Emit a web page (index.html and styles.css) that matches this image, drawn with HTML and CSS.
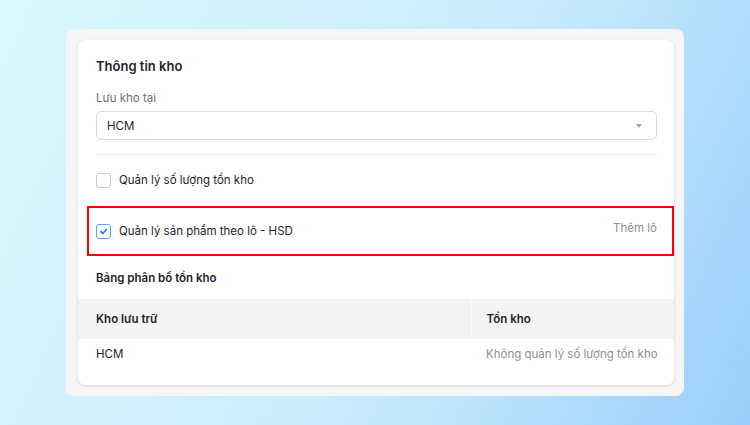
FILE: index.html
```html
<!DOCTYPE html>
<html lang="vi">
<head>
    <meta charset="UTF-8">
    <meta name="viewport" content="width=device-width, initial-scale=1.0">
    <title>Thông tin kho</title>
    <link rel="stylesheet" href="styles.css">
</head>
<body>
    <div class="panel">
        <div class="card">
            <h3 class="card-title">Thông tin kho</h3>

            <label class="field-label">Lưu kho tại</label>
            <div class="select">
                <span>HCM</span>
                <span class="select-arrow"></span>
            </div>

            <hr class="divider">

            <div class="check-row">
                <span class="checkbox"></span>
                <span>Quản lý số lượng tồn kho</span>
            </div>

            <!-- highlighted option -->
            <div class="check-row highlight">
                <span class="checkbox checked">
                    <svg width="9" height="9" viewBox="0 0 10 10"><path d="M2 5.2 L4.2 7.3 L8.2 2.8" fill="none" stroke="#1677ff" stroke-width="1.8" stroke-linecap="round" stroke-linejoin="round"/></svg>
                </span>
                <span>Quản lý sản phẩm theo lô - HSD</span>
                <span class="add-lot">Thêm lô</span>
            </div>

            <h4 class="section-title">Bảng phân bổ tồn kho</h4>

            <table class="stock-table">
                <thead>
                    <tr>
                        <th class="col-store">Kho lưu trữ</th>
                        <th>Tồn kho</th>
                    </tr>
                </thead>
                <tbody>
                    <tr>
                        <td class="col-store">HCM</td>
                        <td class="muted">Không quản lý số lượng tồn kho</td>
                    </tr>
                </tbody>
            </table>
        </div>
    </div>
</body>
</html>
```

FILE: styles.css
```css
body {
    margin: 0;
    width: 750px;
    height: 425px;
    font-family: Inter, "Noto Sans", sans-serif;
    font-size: 11.5px;
    color: #1f2329;
    background: linear-gradient(115deg, #d9f8fd 0%, #c9edfd 55%, #9ccdfa 100%);
    overflow: hidden;
}

.panel {
    margin: 29px 0 0 66px;
    width: 618px;
    height: 367px;
    box-sizing: border-box;
    padding: 11px 10px 11px 12px;
    background-color: #f6f6f6;
    border-radius: 8px;
}

.card {
    height: 100%;
    box-sizing: border-box;
    background: white;
    border-radius: 7px;
    box-shadow: 0 1px 3px rgba(0, 0, 0, 0.15);
    padding: 17px 17px 0 18px;
    display: flex;
    flex-direction: column;
}

.card-title {
    margin: 0;
    font-size: 13px;
    font-weight: 600;
    line-height: 18px;
    color: #1f2329;
}

.field-label {
    margin-top: 15px;
    line-height: 16px;
    color: #6b7078;
}

.select {
    margin-top: 5px;
    height: 29px;
    box-sizing: border-box;
    border: 1px solid #d9d9d9;
    border-radius: 5px;
    padding: 0 10px;
    display: flex;
    align-items: center;
    justify-content: space-between;
}

.select-arrow {
    width: 0;
    height: 0;
    margin-right: 4px;
    border-left: 3.5px solid transparent;
    border-right: 3.5px solid transparent;
    border-top: 4px solid #a3a6ab;
}

.divider {
    margin: 14px 0 0 0;
    border: none;
    border-top: 1px solid #ececec;
}

.check-row {
    margin-top: 17px;
    height: 16px;
    display: flex;
    align-items: center;
    gap: 8px;
    white-space: nowrap;
}

.checkbox {
    width: 13px;
    height: 13px;
    border: 1px solid #c9c9c9;
    border-radius: 3px;
    display: flex;
    align-items: center;
    justify-content: center;
}

.checkbox.checked {
    border-color: #5aa7f7;
}

.highlight {
    margin: 18px -17px 0 -9px;
    height: 50px;
    box-sizing: border-box;
    padding: 0 15px 0 7px;
    border: 2px solid #ff0000;
}

.add-lot {
    margin-left: auto;
    margin-bottom: 6px;
    color: #8c8f94;
}

.section-title {
    margin: 14px 0 0 0;
    font-size: 11.5px;
    font-weight: 600;
    line-height: 16px;
}

.stock-table {
    margin: 13px -17px 0 -18px;
    width: calc(100% + 35px);
    border-collapse: collapse;
    white-space: nowrap;
}

.stock-table th {
    background-color: #f3f4f6;
    height: 40px;
    padding: 0 15px;
    text-align: left;
    font-weight: 600;
}

.stock-table td {
    height: 30px;
    padding: 0 15px;
}

.stock-table th.col-store {
    width: 393px;
    box-sizing: border-box;
    padding-left: 18px;
    border-right: 1px solid #fbfbfc;
}

.stock-table td.col-store {
    padding-left: 18px;
}

.muted {
    color: #8c8f94;
}
```
